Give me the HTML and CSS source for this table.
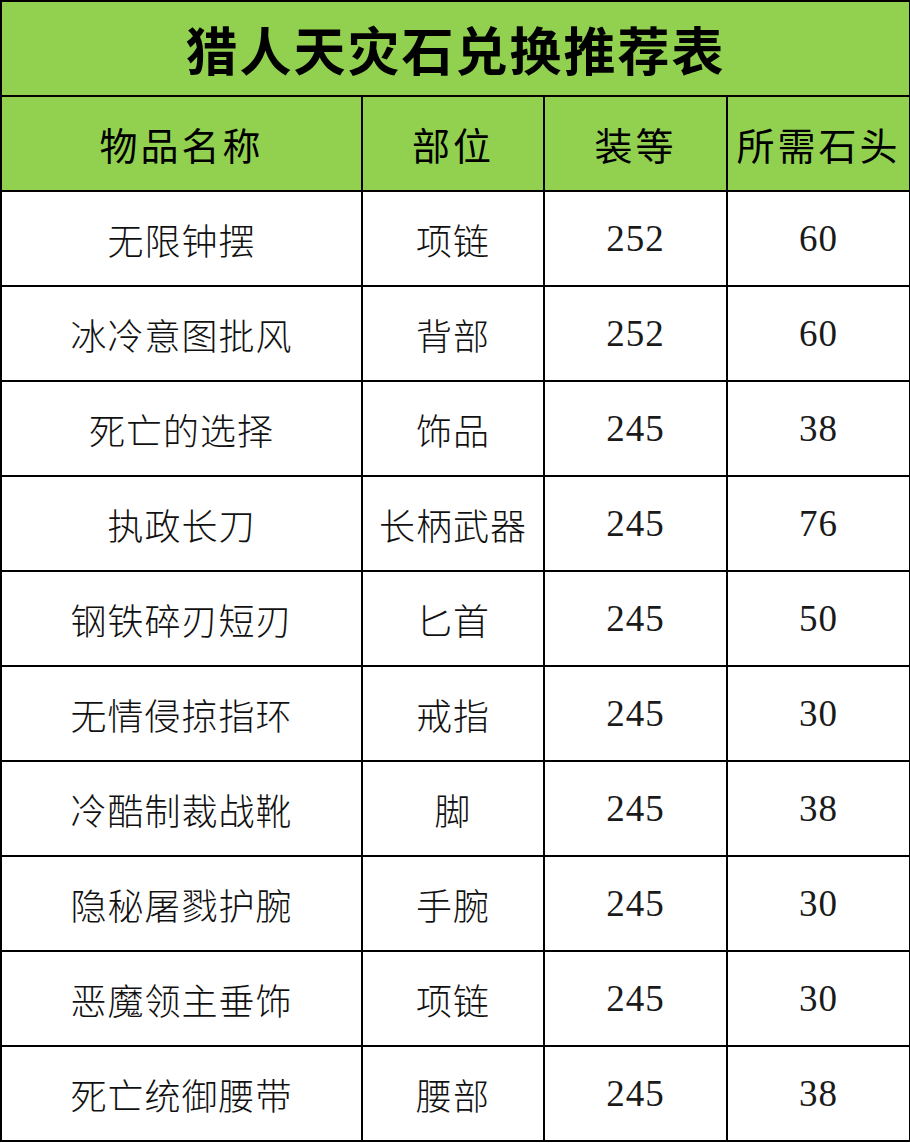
FILE: index.html
```html
<!DOCTYPE html>
<html lang="zh-CN">
<head>
<meta charset="utf-8">
<title>猎人天灾石兑换推荐表</title>
<link rel="stylesheet" href="styles.css">
</head>
<body>
<table class="sheet">
  <colgroup>
    <col class="c-name"><col class="c-slot"><col class="c-lvl"><col class="c-cost">
  </colgroup>
  <tr class="title-row"><td colspan="4">猎人天灾石兑换推荐表</td></tr>
  <tr class="head-row"><td>物品名称</td><td>部位</td><td>装等</td><td>所需石头</td></tr>
  <tr><td>无限钟摆</td><td>项链</td><td class="num">252</td><td class="num">60</td></tr>
  <tr><td>冰冷意图批风</td><td>背部</td><td class="num">252</td><td class="num">60</td></tr>
  <tr><td>死亡的选择</td><td>饰品</td><td class="num">245</td><td class="num">38</td></tr>
  <tr><td>执政长刀</td><td>长柄武器</td><td class="num">245</td><td class="num">76</td></tr>
  <tr><td>钢铁碎刃短刃</td><td>匕首</td><td class="num">245</td><td class="num">50</td></tr>
  <tr><td>无情侵掠指环</td><td>戒指</td><td class="num">245</td><td class="num">30</td></tr>
  <tr><td>冷酷制裁战靴</td><td>脚</td><td class="num">245</td><td class="num">38</td></tr>
  <tr><td>隐秘屠戮护腕</td><td>手腕</td><td class="num">245</td><td class="num">30</td></tr>
  <tr><td>恶魔领主垂饰</td><td>项链</td><td class="num">245</td><td class="num">30</td></tr>
  <tr><td>死亡统御腰带</td><td>腰部</td><td class="num">245</td><td class="num">38</td></tr>
</table>
</body>
</html>
```
FILE: styles.css
```css
html, body {
  margin: 0;
  padding: 0;
  background: #ffffff;
}
body {
  font-family: "Noto Sans CJK SC", "Noto Sans", sans-serif;
  color: #111;
}
.sheet {
  border-collapse: collapse;
  table-layout: fixed;
  width: 909px;
  margin: 0;
}
.c-name { width: 361px; }
.c-slot { width: 182px; }
.c-lvl { width: 183px; }
.c-cost { width: 183px; }
.sheet td {
  border: 2px solid #000;
  height: 93px;
  padding: 0;
  text-align: center;
  vertical-align: middle;
  font-size: 36px;
  font-weight: 300;
  line-height: 1;
  letter-spacing: 1px;
  white-space: nowrap;
  overflow: hidden;
}
.sheet td.num {
  font-family: "Liberation Serif", "DejaVu Serif", serif;
  font-size: 37px;
  letter-spacing: 1px;
  color: #1a1a1a;
}
.title-row td {
  background: #92d050;
  font-size: 52px;
  font-weight: 700;
  letter-spacing: 2px;
  color: #000;
}
.head-row td {
  background: #92d050;
  font-size: 38px;
  font-weight: 400;
  letter-spacing: 3px;
  color: #000;
}
```
